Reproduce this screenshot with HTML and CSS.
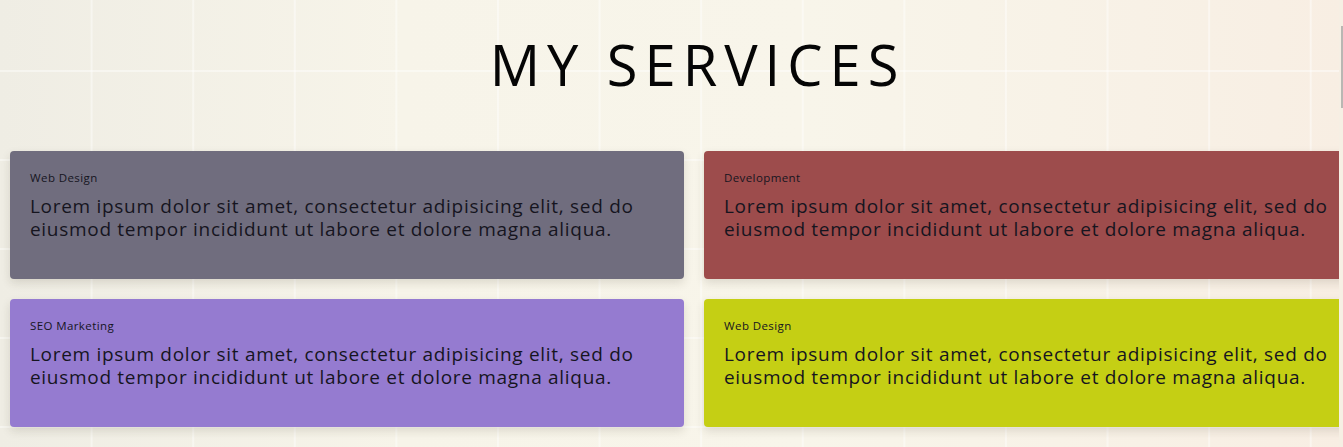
FILE: index.html
```html
<!DOCTYPE html>
<html lang="en">
<head>
<meta charset="utf-8">
<title>My Services</title>
<link rel="stylesheet" href="styles.css">
</head>
<body>
<main class="page">
  <h1 class="heading">MY SERVICES</h1>
  <section class="services">
    <article class="card card-gray">
      <h3 class="card-title">Web Design</h3>
      <p class="card-text">Lorem ipsum dolor sit amet, consectetur adipisicing elit, sed do eiusmod tempor incididunt ut labore et dolore magna aliqua.</p>
    </article>
    <article class="card card-red">
      <h3 class="card-title">Development</h3>
      <p class="card-text">Lorem ipsum dolor sit amet, consectetur adipisicing elit, sed do eiusmod tempor incididunt ut labore et dolore magna aliqua.</p>
    </article>
    <article class="card card-purple">
      <h3 class="card-title">SEO Marketing</h3>
      <p class="card-text">Lorem ipsum dolor sit amet, consectetur adipisicing elit, sed do eiusmod tempor incididunt ut labore et dolore magna aliqua.</p>
    </article>
    <article class="card card-lime">
      <h3 class="card-title">Web Design</h3>
      <p class="card-text">Lorem ipsum dolor sit amet, consectetur adipisicing elit, sed do eiusmod tempor incididunt ut labore et dolore magna aliqua.</p>
    </article>
  </section>
</main>
<div class="scrollbar"><div class="scrollbar-thumb"></div></div>
</body>
</html>
```

FILE: styles.css
```css
html {
  overflow: hidden;
}
body {
  margin: 0;
  overflow: hidden;
  font-family: "Open Sans", "Liberation Sans", sans-serif;
  color: #16151f;
  background-color: #f7f3e9;
  background-image:
    linear-gradient(90deg, transparent 0, transparent 99.6px, rgba(255,255,255,0.42) 99.6px, rgba(255,255,255,0.42) 101.6px),
    linear-gradient(180deg, transparent 0, transparent 87px, rgba(255,255,255,0.42) 87px, rgba(255,255,255,0.42) 89px),
    linear-gradient(90deg, #efede4 0%, #f7f4e9 30%, #f8f5ea 60%, #f8f1e6 85%, #f8eee3 100%);
  background-size: 101.6px 89px, 101.6px 89px, 100% 100%;
  background-position: -9px -17px, -9px -17px, 0 0;
  min-height: 447px;
}
.page {
  width: max-content;
  padding: 24px 10px 0;
}
.heading {
  margin: 0 0 47px;
  text-align: center;
  font-size: 56px;
  font-weight: 400;
  line-height: 80px;
  color: #050505;
  letter-spacing: 7px;
  padding-left: 7px;
}
.services {
  display: grid;
  grid-template-columns: repeat(2, 674px);
  gap: 20px;
}
.card {
  height: 128px;
  box-sizing: border-box;
  padding: 20px 20px;
  border-radius: 4px;
  box-shadow: 0 4px 10px rgba(60, 50, 30, 0.14);
}
.card-gray { background: #706d7e; }
.card-red { background: #9d4c4c; }
.card-purple { background: #957bd0; }
.card-lime { background: #c5cf14; }
.card-title {
  margin: 0 0 10px;
  font-size: 11.5px;
  font-weight: 500;
  line-height: 14px;
  letter-spacing: 0.4px;
}
.card-text {
  margin: 0;
  font-size: 19px;
  line-height: 23px;
  letter-spacing: 0.7px;
}
.scrollbar {
  position: fixed;
  top: 0;
  right: 0;
  width: 4px;
  height: 100%;
  background: #f6efe4;
}
.scrollbar-thumb {
  margin: 26px 0 0 2px;
  width: 2px;
  height: 82px;
  background: #b9b7b3;
}
```
